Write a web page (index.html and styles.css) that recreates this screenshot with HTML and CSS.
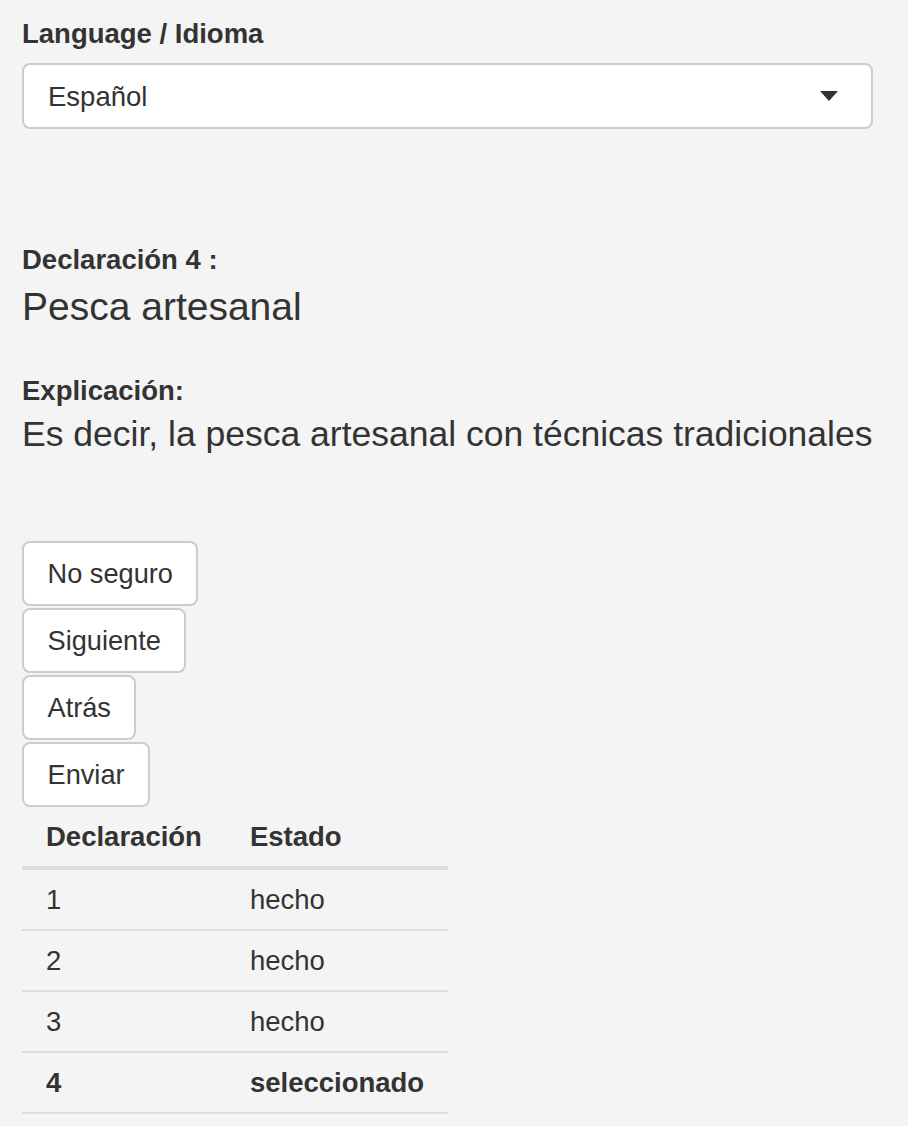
FILE: index.html
```html
<!DOCTYPE html>
<html lang="es">
<head>
<meta charset="utf-8">
<title>Declaración</title>
<link rel="stylesheet" href="styles.css">
</head>
<body>
<div class="page">
  <div class="form-group">
    <label class="control-label">Language / Idioma</label>
    <div class="select-box">
      <span class="select-value">Español</span>
      <span class="caret"></span>
    </div>
  </div>

  <div class="statement">
    <div class="field-label">Declaración 4 :</div>
    <div class="stmt-title">Pesca artesanal</div>
    <div class="field-label expl-label">Explicación:</div>
    <div class="expl-text">Es decir, la pesca artesanal con técnicas tradicionales</div>
  </div>

  <div class="buttons">
    <button class="btn" type="button">No seguro</button>
    <button class="btn" type="button">Siguiente</button>
    <button class="btn" type="button">Atrás</button>
    <button class="btn" type="button">Enviar</button>
  </div>

  <table class="status-table">
    <thead>
      <tr><th>Declaración</th><th>Estado</th></tr>
    </thead>
    <tbody>
      <tr><td>1</td><td>hecho</td></tr>
      <tr><td>2</td><td>hecho</td></tr>
      <tr><td>3</td><td>hecho</td></tr>
      <tr class="current"><td>4</td><td>seleccionado</td></tr>
    </tbody>
  </table>
</div>
</body>
</html>
```

FILE: styles.css
```css
html, body {
  margin: 0;
  padding: 0;
  background: #f4f4f4;
}

body {
  font-family: "Liberation Sans", Arial, Helvetica, sans-serif;
  font-size: 27.5px;
  line-height: 39.3px;
  color: #333333;
}

.page {
  padding: 14px 35px 0 22px;
  width: 851px;
}

.control-label {
  display: block;
  font-weight: bold;
  margin: 0 0 10px 0;
}

.select-box {
  box-sizing: border-box;
  height: 66px;
  background: #ffffff;
  border: 2px solid #cccccc;
  border-radius: 8px;
  display: flex;
  align-items: center;
  justify-content: space-between;
  padding: 0 33px 0 24px;
}

.caret {
  width: 0;
  height: 0;
  border-top: 10px solid #333333;
  border-left: 9.5px solid transparent;
  border-right: 9.5px solid transparent;
}

.statement {
  margin-top: 111px;
}

.field-label {
  font-weight: bold;
}

.stmt-title {
  font-size: 39px;
  line-height: 43px;
  margin-top: 5px;
}

.expl-label {
  margin-top: 43px;
}

.expl-text {
  font-size: 35.5px;
  line-height: 39px;
  margin-top: 5px;
}

.buttons {
  margin-top: 87px;
  display: flex;
  flex-direction: column;
  align-items: flex-start;
  gap: 2px;
}

.btn {
  box-sizing: border-box;
  height: 65px;
  font-family: inherit;
  font-size: 27.2px;
  line-height: 39.3px;
  color: #333333;
  background: #ffffff;
  border: 2px solid #cccccc;
  border-radius: 8px;
  padding: 0 23.5px;
  margin: 0;
}

.status-table {
  border-collapse: collapse;
  margin-top: 0;
}

.status-table th,
.status-table td {
  text-align: left;
  padding: 10px 24px;
  line-height: 39px;
}

.status-table th {
  font-weight: bold;
  border-bottom: 4px solid #dddddd;
}

.status-table td {
  border-top: 2px solid #dddddd;
}

.status-table tbody tr:last-child td {
  border-bottom: 2px solid #dddddd;
}

.status-table tr.current td {
  font-weight: bold;
}
```
